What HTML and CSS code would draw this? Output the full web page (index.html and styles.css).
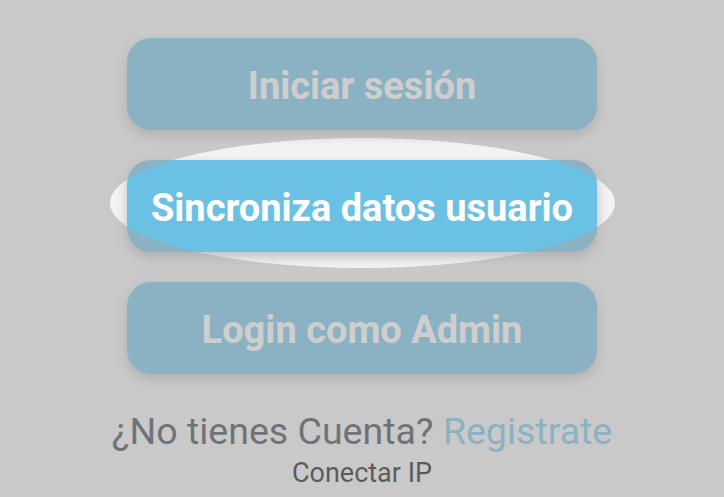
FILE: index.html
```html
<!DOCTYPE html>
<html lang="es">
<head>
<meta charset="utf-8">
<title>Login</title>
<link rel="stylesheet" href="styles.css">
</head>
<body>
<main class="screen">
  <div class="actions">
    <button class="btn">Iniciar sesión</button>
    <button class="btn">Sincroniza datos usuario</button>
    <button class="btn">Login como Admin</button>
  </div>
  <p class="signup">¿No tienes Cuenta? <a class="link" href="#">Registrate</a></p>
  <p class="ip">Conectar IP</p>
</main>
<div class="spotlight"></div>
</body>
</html>
```
FILE: styles.css
```css
html, body {
  margin: 0;
  padding: 0;
}
body {
  width: 724px;
  height: 497px;
  overflow: hidden;
  background: #f3f3f3;
  font-family: Roboto, "Noto Sans", sans-serif;
  position: relative;
}
.screen {
  display: flex;
  flex-direction: column;
  align-items: center;
  padding-top: 38px;
}
.actions {
  display: flex;
  flex-direction: column;
  gap: 30px;
  width: 470px;
}
.btn {
  height: 92px;
  border: none;
  border-radius: 24px;
  background: #6bc1e4;
  color: #ffffff;
  font-family: Roboto, sans-serif;
  font-weight: 700;
  font-size: 38px;
  box-shadow: 0 5px 12px rgba(0, 0, 0, 0.22);
  padding: 4px 0 0;
}
.signup {
  margin: 35px 0 0;
  font-size: 37.5px;
  line-height: 44px;
  color: #2e3540;
}
.link {
  color: #6bc1e4;
  text-decoration: none;
}
.ip {
  margin: 4px 0 0;
  font-size: 27px;
  line-height: 32px;
  color: #000;
}
.spotlight {
  position: absolute;
  left: 110px;
  top: 138px;
  width: 505px;
  height: 130px;
  border-radius: 50%;
  box-shadow: 0 0 0 2000px rgba(165, 165, 165, 0.55);
  pointer-events: none;
}
```
